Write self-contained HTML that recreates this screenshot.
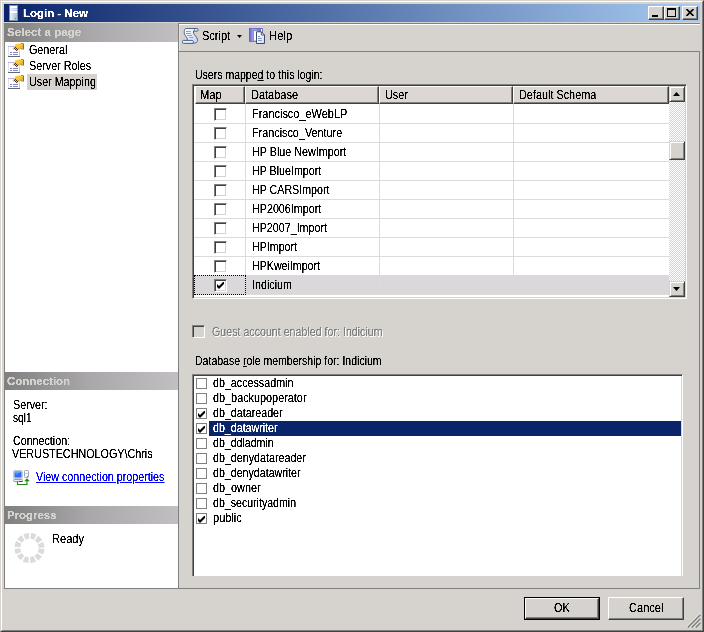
<!DOCTYPE html>
<html lang="en"><head><meta charset="utf-8"><title>Login - New</title>
<style>
html,body{margin:0;padding:0}
body{position:relative;width:704px;height:632px;overflow:hidden;background:#d6d3ce;font:13px/1 "Liberation Sans",sans-serif;color:#000}
.a{position:absolute;box-sizing:border-box}
.t{position:absolute;white-space:pre;font:13px/13px "Liberation Sans",sans-serif;transform-origin:0 0;color:#000}
.t.b{font:bold 11.5px/12px "Liberation Sans",sans-serif}
.t u{text-decoration:underline}
.hdr{background:linear-gradient(90deg,#808080,#a9a7a9 48%,#c2bfc2)}
.cb13{width:13px;height:13px;background:#fff;border:1px solid;border-color:#808080 #fff #fff #808080;box-shadow:inset 1px 1px 0 #404040,inset -1px -1px 0 #d6d3ce}
.cb11{width:11px;height:11px;background:#fff;border:1px solid #808080}
.btn{background:#d6d3ce;border:1px solid;border-color:#fff #404040 #404040 #fff;box-shadow:inset -1px -1px 0 #808080}
.hc{background:#dcd7d3;border:1px solid;border-color:#fff #404040 #404040 #fff;box-shadow:inset -1px -1px 0 #808080}
.hl{background:#dedad7}
#txt{position:absolute;left:0;top:0;width:704px;height:632px;will-change:transform;filter:url(#thr)}
.sbtn{background:#d6d3ce;border:1px solid;border-color:#d6d3ce #404040 #404040 #d6d3ce;box-shadow:inset 1px 1px 0 #fff,inset -1px -1px 0 #808080}

</style></head>
<body>
<svg width="0" height="0" style="position:absolute"><filter id="thr" x="0" y="0" width="100%" height="100%" color-interpolation-filters="sRGB"><feComponentTransfer><feFuncA type="linear" slope="3.5" intercept="-0.85"/></feComponentTransfer></filter></svg>
<!-- window frame -->
<div class="a" style="left:0;top:0;width:704px;height:632px;border:1px solid;border-color:#d6d3ce #404040 #404040 #d6d3ce"></div>
<div class="a" style="left:1px;top:1px;width:702px;height:630px;border:1px solid;border-color:#fff #808080 #808080 #fff"></div>
<!-- title bar -->
<div class="a" style="left:4px;top:4px;width:696px;height:18px;background:linear-gradient(90deg,#0a246a,#a6caf0)"></div>
<svg class="a" style="left:9px;top:5px" width="9" height="16" viewBox="0 0 9 16">
<defs><linearGradient id="sv" x1="0" y1="0" x2="1" y2="0"><stop offset="0" stop-color="#f4f7ff"/><stop offset="1" stop-color="#a8b8e4"/></linearGradient></defs>
<rect x="0.5" y="0.5" width="8" height="15" fill="url(#sv)" stroke="#7c8cb4"/>
<rect x="1" y="1" width="7" height="2" fill="#fff"/><rect x="1" y="4" width="7" height="1" fill="#dfe7fb"/><rect x="1" y="6" width="7" height="2" fill="#fff"/>
<rect x="5.700" y="12.700" width="1.500" height="1.500" fill="#40d010"/>
</svg>
<!-- caption buttons -->
<div class="a btn" style="left:648px;top:6px;width:16px;height:14px"></div>
<div class="a btn" style="left:664px;top:6px;width:16px;height:14px"></div>
<div class="a btn" style="left:682px;top:6px;width:16px;height:14px"></div>
<div class="a" style="left:652px;top:15px;width:6px;height:2px;background:#000"></div>
<div class="a" style="left:667px;top:8px;width:9px;height:9px;border:1px solid #000;border-top-width:2px"></div>
<svg class="a" style="left:686px;top:9px" width="8" height="7" viewBox="0 0 8 7"><path d="M0.5 0L7.5 7M7.5 0L0.5 7" stroke="#000" stroke-width="1.6" fill="none"/></svg>
<!-- left panel -->
<div class="a" style="left:4px;top:23px;width:174px;height:566px;background:#fff;border-left:1px solid #808080;border-bottom:1px solid #808080"></div>
<div class="a hdr" style="left:4px;top:23px;width:174px;height:19px"></div>
<div class="a hdr" style="left:5px;top:372px;width:173px;height:18px"></div>
<div class="a hdr" style="left:5px;top:506px;width:173px;height:18px"></div>
<div class="a" style="left:27px;top:74px;width:70px;height:16px;background:#d6d3ce"></div>
<!-- page icons -->
<svg class="a" style="left:8px;top:42px" width="16" height="48" viewBox="0 0 16 48">
<defs>
<linearGradient id="hg" x1="0" y1="0" x2="1" y2="1"><stop offset="0" stop-color="#ffe46a"/><stop offset="1" stop-color="#f09a10"/></linearGradient>
<pattern id="ck" width="2" height="2" patternUnits="userSpaceOnUse"><rect width="2" height="2" fill="#f4d020"/><rect width="1" height="1" fill="#403018"/><rect x="1" y="1" width="1" height="1" fill="#403018"/></pattern>
</defs>
<g>
<rect x="0.5" y="4.5" width="11" height="10" fill="#fff" stroke="#e0e0ec"/>
<path d="M0 4.500h8" stroke="#b4b4f4"/>
<path d="M0 14.500h12" stroke="#686868"/><path d="M11.500 9v5" stroke="#c4c8f0"/>
<path d="M2 10.500h2M5 10.500h5M2 12.500h2M5 12.500h5" stroke="#8484d4"/>
<ellipse cx="11.800" cy="4.200" rx="3.600" ry="2.900" fill="url(#hg)"/>
<path d="M5 5.500L8 2l3 .5 1 4-3 .5z" fill="#f6c838"/>
<path d="M4.500 6.500l2.500-3 1.200.3-2.700 4.200z" fill="#f0c8a0"/>
<path d="M7 4.500l4 2.500-2 2.500-3.500-3z" fill="url(#ck)"/>
<rect x="15" y="1.500" width="1" height="6" fill="#2ca02c"/>
<path d="M13 1.500h2M13 7h2" stroke="#707070" stroke-width="0.800"/>
</g>
<g transform="translate(0,16)">
<rect x="0.5" y="4.5" width="11" height="10" fill="#fff" stroke="#e0e0ec"/>
<path d="M0 4.500h8" stroke="#b4b4f4"/>
<path d="M0 14.500h12" stroke="#686868"/><path d="M11.500 9v5" stroke="#c4c8f0"/>
<path d="M2 10.500h2M5 10.500h5M2 12.500h2M5 12.500h5" stroke="#8484d4"/>
<ellipse cx="11.800" cy="4.200" rx="3.600" ry="2.900" fill="url(#hg)"/>
<path d="M5 5.500L8 2l3 .5 1 4-3 .5z" fill="#f6c838"/>
<path d="M4.500 6.500l2.500-3 1.200.3-2.700 4.200z" fill="#f0c8a0"/>
<path d="M7 4.500l4 2.500-2 2.500-3.500-3z" fill="url(#ck)"/>
<rect x="15" y="1.500" width="1" height="6" fill="#2ca02c"/>
<path d="M13 1.500h2M13 7h2" stroke="#707070" stroke-width="0.800"/>
</g>
<g transform="translate(0,32)">
<rect x="0.5" y="4.5" width="11" height="10" fill="#fff" stroke="#e0e0ec"/>
<path d="M0 4.500h8" stroke="#b4b4f4"/>
<path d="M0 14.500h12" stroke="#686868"/><path d="M11.500 9v5" stroke="#c4c8f0"/>
<path d="M2 10.500h2M5 10.500h5M2 12.500h2M5 12.500h5" stroke="#8484d4"/>
<ellipse cx="11.800" cy="4.200" rx="3.600" ry="2.900" fill="url(#hg)"/>
<path d="M5 5.500L8 2l3 .5 1 4-3 .5z" fill="#f6c838"/>
<path d="M4.500 6.500l2.500-3 1.200.3-2.700 4.200z" fill="#f0c8a0"/>
<path d="M7 4.500l4 2.500-2 2.500-3.500-3z" fill="url(#ck)"/>
<rect x="15" y="1.500" width="1" height="6" fill="#2ca02c"/>
<path d="M13 1.500h2M13 7h2" stroke="#707070" stroke-width="0.800"/>
</g>
</svg>
<!-- connection icon -->
<svg class="a" style="left:13px;top:470px" width="17" height="16" viewBox="0 0 17 16">
<rect x="0.500" y="0.500" width="9" height="8" rx="1" fill="#e4e4ee" stroke="#c4c4d4"/>
<rect x="1.500" y="1.500" width="7" height="6" fill="#2a6cf8"/>
<path d="M2 2.500h5M2.500 4h3" stroke="#78b0ff" stroke-width="0.800"/>
<rect x="0.500" y="9.500" width="9" height="2" rx="0.800" fill="#ececf4" stroke="#9c9cb4"/>
<path d="M6 11.500h3.500" stroke="#3c3c78"/>
<rect x="11.500" y="0.500" width="4" height="7" rx="0.800" fill="#f8f8fc" stroke="#a4a4b8"/>
<path d="M12 3.500h3" stroke="#c4c4d8" stroke-width="0.800"/>
<rect x="14" y="6" width="1" height="1" fill="#30c020"/>
<path d="M4.500 11.500v3h9.500v-5" stroke="#1c8c0c" stroke-width="1.100" fill="none"/>
<path d="M11.200 11.300l2.800-3 2.800 3z" fill="#1c8c0c"/>
</svg>
<!-- spinner -->
<svg class="a" style="left:13px;top:532px" width="33" height="33" viewBox="0 0 33 33">
<circle cx="16.500" cy="16" r="12.100" fill="none" stroke="#dcdadc" stroke-width="5.800" stroke-dasharray="4.700 1.635" stroke-dashoffset="-0.820"/>
</svg>
<!-- right panel lines -->
<div class="a" style="left:178px;top:23px;width:1px;height:566px;background:#808080"></div>
<div class="a" style="left:179px;top:24px;width:521px;height:1px;background:#fff"></div>
<div class="a" style="left:179px;top:25px;width:1px;height:26px;background:#e6e3df"></div>
<div class="a" style="left:178px;top:23px;width:522px;height:1px;background:#808080"></div>
<div class="a" style="left:179px;top:51px;width:521px;height:1px;background:#808080"></div>
<div class="a" style="left:699px;top:51px;width:1px;height:538px;background:#808080"></div>
<div class="a" style="left:178px;top:588px;width:522px;height:1px;background:#808080"></div>
<!-- toolbar icons -->
<svg class="a" style="left:182px;top:28px" width="17" height="16" viewBox="0 0 17 16">
<defs><linearGradient id="sg" x1="0" y1="0" x2="1" y2="1"><stop offset="0" stop-color="#ffffff"/><stop offset="1" stop-color="#c4d4f8"/></linearGradient></defs>
<path d="M3.500 0.500H15C16.600 0.500 16.600 3.200 15 3.200H11.500V5C12 7 15 8.500 15.500 12C15.800 14 14.500 15 11 15.300H5.500V12C5.500 9.500 2.200 7 2.200 5C2.200 3 2.500 1.500 3.500 0.500Z" fill="url(#sg)" stroke="#44587c" stroke-width="0.900"/>
<path d="M11.500 3.200c1.500-.2 1.500-2.400 0-2.700" fill="none" stroke="#44587c" stroke-width="0.700"/>
<rect x="0.400" y="12.400" width="11" height="3" rx="1.200" fill="#e4ecff" stroke="#3c5484" stroke-width="0.900"/>
<path d="M4 3.500h4.800M4 5.500h4.800M5.100 7.500h4.900M7.200 9.500h4.100" stroke="#84a0ec"/>
</svg>
<svg class="a" style="left:237px;top:35px" width="5" height="3" viewBox="0 0 5 3"><path d="M0 0h5l-2.500 3z" fill="#000"/></svg>
<svg class="a" style="left:249px;top:28px" width="17" height="17" viewBox="0 0 17 17">
<defs><linearGradient id="bk" x1="0" y1="0" x2="1" y2="0"><stop offset="0" stop-color="#6460c4"/><stop offset="0.300" stop-color="#a4a4f4"/><stop offset="1" stop-color="#6c68d0"/></linearGradient>
<linearGradient id="dg" x1="0" y1="0" x2="1" y2="1"><stop offset="0.300" stop-color="#ffffff"/><stop offset="1" stop-color="#c8d8f4"/></linearGradient></defs>
<rect x="0.300" y="0.300" width="13" height="13.200" fill="url(#bk)" stroke="#5450b0" stroke-width="0.600"/>
<rect x="12" y="1" width="1" height="3.500" fill="#fff"/>
<rect x="4.500" y="2.700" width="4.600" height="10.300" fill="#fff" stroke="#7888a4" stroke-width="0.800"/>
<path d="M7.500 3.800H12.300L15.500 7V15.500H7.500Z" fill="url(#dg)" stroke="#2c3c5c" stroke-width="0.900"/>
<path d="M12.300 3.800V7H15.500" fill="none" stroke="#2c3c5c" stroke-width="0.800"/>
<path d="M9 8.500h2.200M9 10.500h3.800M9 12.500h3.800" stroke="#8494c4"/>
</svg>
<!-- grid -->
<div class="a" style="left:192px;top:84px;width:495px;height:215px;background:#fff;border:1px solid;border-color:#808080 #fff #fff #808080;box-shadow:inset 1px 1px 0 #404040,inset -1px -1px 0 #d6d3ce"></div>
<div class="a" style="left:194px;top:276px;width:475px;height:18px;background:#dad8db"></div>
<!-- grid lines -->
<div class="a hl" style="left:194px;top:123px;width:475px;height:1px"></div>
<div class="a hl" style="left:194px;top:142px;width:475px;height:1px"></div>
<div class="a hl" style="left:194px;top:161px;width:475px;height:1px"></div>
<div class="a hl" style="left:194px;top:180px;width:475px;height:1px"></div>
<div class="a hl" style="left:194px;top:199px;width:475px;height:1px"></div>
<div class="a hl" style="left:194px;top:218px;width:475px;height:1px"></div>
<div class="a hl" style="left:194px;top:237px;width:475px;height:1px"></div>
<div class="a hl" style="left:194px;top:256px;width:475px;height:1px"></div>
<div class="a hl" style="left:194px;top:275px;width:475px;height:1px"></div>
<div class="a hl" style="left:194px;top:294px;width:475px;height:1px"></div>
<div class="a hl" style="left:245px;top:104px;width:1px;height:191px"></div>
<div class="a hl" style="left:379px;top:104px;width:1px;height:191px"></div>
<div class="a hl" style="left:513px;top:104px;width:1px;height:191px"></div>
<!-- header cells -->
<div class="a hc" style="left:195px;top:86px;width:50px;height:18px"></div>
<div class="a hc" style="left:245px;top:86px;width:134px;height:18px"></div>
<div class="a hc" style="left:379px;top:86px;width:134px;height:18px"></div>
<div class="a hc" style="left:513px;top:86px;width:156px;height:18px"></div>
<!-- focus rect -->
<div class="a" style="left:194px;top:275px;width:52px;height:20px;border:1px dotted #000"></div>
<!-- scrollbar -->
<div class="a" style="left:669px;top:86px;width:16px;height:211px;background:repeating-conic-gradient(#fff 0 25%,#d6d3ce 0 50%) 0 0/2px 2px"></div>
<div class="a sbtn" style="left:669px;top:86px;width:16px;height:16px"></div>
<div class="a sbtn" style="left:669px;top:281px;width:16px;height:16px"></div>
<div class="a sbtn" style="left:669px;top:141px;width:16px;height:19px"></div>
<svg class="a" style="left:673px;top:92px" width="7" height="4" viewBox="0 0 7 4"><path d="M0 4h7l-3.500-4z" fill="#000"/></svg>
<svg class="a" style="left:673px;top:287px" width="7" height="4" viewBox="0 0 7 4"><path d="M0 0h7l-3.500 4z" fill="#000"/></svg>
<!-- grid checkboxes -->
<div class="a cb13" style="left:214px;top:108px"></div>
<div class="a cb13" style="left:214px;top:127px"></div>
<div class="a cb13" style="left:214px;top:146px"></div>
<div class="a cb13" style="left:214px;top:165px"></div>
<div class="a cb13" style="left:214px;top:184px"></div>
<div class="a cb13" style="left:214px;top:203px"></div>
<div class="a cb13" style="left:214px;top:222px"></div>
<div class="a cb13" style="left:214px;top:241px"></div>
<div class="a cb13" style="left:214px;top:260px"></div>
<div class="a cb13" style="left:214px;top:279px"></div>
<svg class="a" style="left:217px;top:282px" width="7" height="7" viewBox="0 0 7 7"><path d="M0 2v3l2 2 5-5v-3l-5 5z" fill="#000"/></svg>
<!-- guest checkbox -->
<div class="a cb13" style="left:192px;top:325px;background:#d6d3ce"></div>
<!-- roles list -->
<div class="a" style="left:192px;top:374px;width:491px;height:202px;background:#fff;border:1px solid;border-width:1px 1px 0 1px;border-color:#808080 #fff #fff #808080;box-shadow:inset 1px 1px 0 #404040,inset -1px 0 0 #d6d3ce"></div>
<div class="a" style="left:209px;top:421px;width:472px;height:15px;background:#0a246a"></div>
<div class="a cb11" style="left:196px;top:378px"></div>
<div class="a cb11" style="left:196px;top:393px"></div>
<div class="a cb11" style="left:196px;top:408px"></div>
<div class="a cb11" style="left:196px;top:423px"></div>
<div class="a cb11" style="left:196px;top:438px"></div>
<div class="a cb11" style="left:196px;top:453px"></div>
<div class="a cb11" style="left:196px;top:468px"></div>
<div class="a cb11" style="left:196px;top:483px"></div>
<div class="a cb11" style="left:196px;top:498px"></div>
<div class="a cb11" style="left:196px;top:513px"></div>
<svg class="a" style="left:198px;top:411px" width="7" height="7" viewBox="0 0 7 7"><path d="M0 2v3l2 2 5-5v-3l-5 5z" fill="#000"/></svg>
<svg class="a" style="left:198px;top:426px" width="7" height="7" viewBox="0 0 7 7"><path d="M0 2v3l2 2 5-5v-3l-5 5z" fill="#000"/></svg>
<svg class="a" style="left:198px;top:516px" width="7" height="7" viewBox="0 0 7 7"><path d="M0 2v3l2 2 5-5v-3l-5 5z" fill="#000"/></svg>
<!-- buttons -->
<div class="a" style="left:524px;top:597px;width:76px;height:23px;border:1px solid #000"></div>
<div class="a btn" style="left:525px;top:598px;width:74px;height:21px"></div>
<div class="a btn" style="left:608px;top:597px;width:76px;height:23px"></div>
<!-- size grip -->
<svg class="a" style="left:686px;top:613px" width="15" height="15" viewBox="0 0 15 15">
<path d="M1.7 14.3L14.3 1.7M5.7 14.3L14.3 5.7M9.7 14.3L14.3 9.7" stroke="#808080" stroke-width="1.650"/>
<path d="M0.2 14.3L14.3 0.2M4.2 14.3L14.3 4.2M8.2 14.3L14.3 8.2" stroke="#fff" stroke-width="0.750"/>
</svg>

<div id="txt">
<span class="t b" style="left:22.95px;top:7px;transform:scaleX(0.9966);color:#fff">Login - New</span>
<span class="t b" style="left:6.95px;top:26px;transform:scaleX(1.0113);color:#d6d3ce">Select a page</span>
<span class="t b" style="left:6.80px;top:375px;transform:scaleX(0.9976);color:#d6d3ce">Connection</span>
<span class="t b" style="left:6.70px;top:509px;transform:scaleX(0.9948);color:#d6d3ce">Progress</span>
<span class="t" style="left:28.90px;top:43px;transform:scaleX(0.8281);">General</span>
<span class="t" style="left:28.90px;top:59px;transform:scaleX(0.8278);">Server Roles</span>
<span class="t" style="left:28.90px;top:75px;transform:scaleX(0.8266);">User Mapping</span>
<span class="t" style="left:12.70px;top:398px;transform:scaleX(0.8257);">Server:</span>
<span class="t" style="left:12.70px;top:411px;transform:scaleX(0.7796);">sql1</span>
<span class="t" style="left:12.70px;top:434px;transform:scaleX(0.8229);">Connection:</span>
<span class="t" style="left:12.20px;top:447px;transform:scaleX(0.8283);">VERUSTECHNOLOGY\Chris</span>
<span class="t" style="left:36.20px;top:470px;transform:scaleX(0.8238);color:#00f;text-decoration:underline">View connection properties</span>
<span class="t" style="left:51.70px;top:532px;transform:scaleX(0.8542);">Ready</span>
<span class="t" style="left:201.70px;top:29px;transform:scaleX(0.8485);">Script</span>
<span class="t" style="left:268.60px;top:29px;transform:scaleX(0.8673);">Help</span>
<span class="t" style="left:194.90px;top:68px;transform:scaleX(0.8094);">Users mappe<u>d</u> to this login:</span>
<span class="t" style="left:200.00px;top:88px;transform:scaleX(0.8618);">Map</span>
<span class="t" style="left:250.70px;top:88px;transform:scaleX(0.8463);">Database</span>
<span class="t" style="left:384.60px;top:88px;transform:scaleX(0.8341);">User</span>
<span class="t" style="left:518.70px;top:88px;transform:scaleX(0.8357);">Default Schema</span>
<span class="t" style="left:251.80px;top:107px;transform:scaleX(0.8417);">Francisco_eWebLP</span>
<span class="t" style="left:251.80px;top:126px;transform:scaleX(0.8321);">Francisco_Venture</span>
<span class="t" style="left:251.80px;top:145px;transform:scaleX(0.8273);">HP Blue NewImport</span>
<span class="t" style="left:251.80px;top:164px;transform:scaleX(0.8215);">HP BlueImport</span>
<span class="t" style="left:251.80px;top:183px;transform:scaleX(0.8199);">HP CARSImport</span>
<span class="t" style="left:251.80px;top:202px;transform:scaleX(0.8261);">HP2006Import</span>
<span class="t" style="left:251.80px;top:221px;transform:scaleX(0.8236);">HP2007_Import</span>
<span class="t" style="left:251.80px;top:240px;transform:scaleX(0.8196);">HPImport</span>
<span class="t" style="left:251.80px;top:259px;transform:scaleX(0.8185);">HPKweiImport</span>
<span class="t" style="left:251.80px;top:278px;transform:scaleX(0.8240);">Indicium</span>
<span class="t" style="left:212.20px;top:325px;transform:scaleX(0.8197);color:#808080;text-shadow:1px 1px 0 #fff">Guest account enabled for: Indicium</span>
<span class="t" style="left:194.70px;top:354px;transform:scaleX(0.8095);">Database <u>r</u>ole membership for: Indicium</span>
<span class="t" style="left:213.20px;top:376px;transform:scaleX(0.8241);">db_accessadmin</span>
<span class="t" style="left:213.20px;top:391px;transform:scaleX(0.8346);">db_backupoperator</span>
<span class="t" style="left:213.20px;top:406px;transform:scaleX(0.8229);">db_datareader</span>
<span class="t" style="left:213.20px;top:421px;transform:scaleX(0.8200);color:#fff">db_datawriter</span>
<span class="t" style="left:213.20px;top:436px;transform:scaleX(0.8153);">db_ddladmin</span>
<span class="t" style="left:213.20px;top:451px;transform:scaleX(0.8238);">db_denydatareader</span>
<span class="t" style="left:213.20px;top:466px;transform:scaleX(0.8189);">db_denydatawriter</span>
<span class="t" style="left:213.20px;top:481px;transform:scaleX(0.8335);">db_owner</span>
<span class="t" style="left:213.20px;top:496px;transform:scaleX(0.8156);">db_securityadmin</span>
<span class="t" style="left:213.20px;top:511px;transform:scaleX(0.8478);">public</span>
<span class="t" style="left:553.80px;top:601px;transform:scaleX(0.8406);">OK</span>
<span class="t" style="left:628.50px;top:601px;transform:scaleX(0.8525);">Cancel</span>
</div>
</body></html>
